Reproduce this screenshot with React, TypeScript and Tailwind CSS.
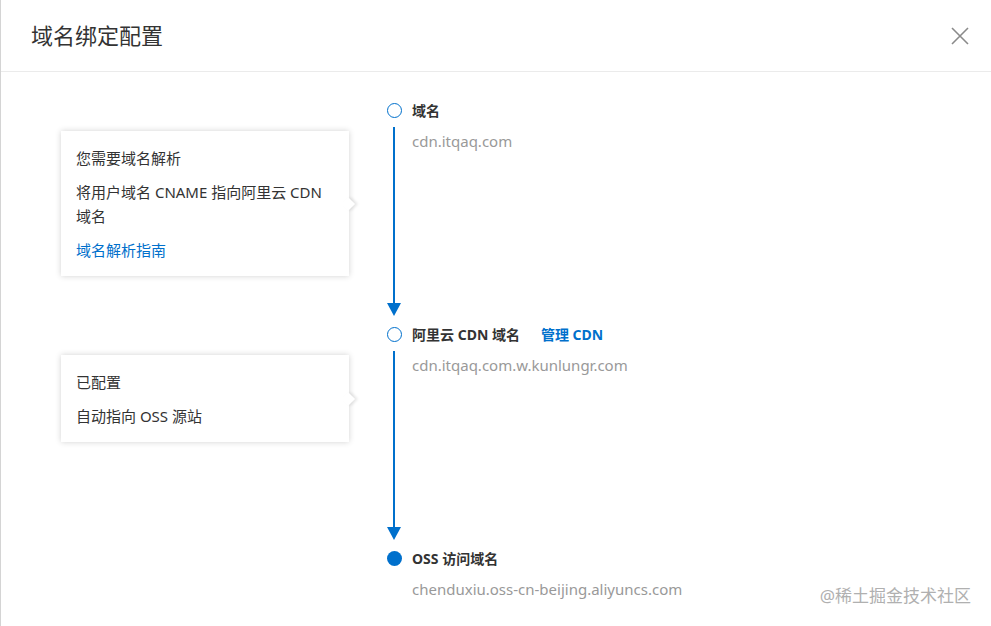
import React from 'react';

const font = { fontFamily: '"Noto Sans", "Noto Sans CJK SC", sans-serif' };

type Step = {
  label: React.ReactNode;
  value: string;
  filled?: boolean;
  last?: boolean;
  card?: React.ReactNode;
};

const Card: React.FC<{ children: React.ReactNode }> = ({ children }) => (
  <div className="relative mt-[28px] w-[288px] bg-white px-[15px] pt-[15px] pb-[14px] shadow-[0_0_6px_rgba(0,0,0,0.18)]">
    <div className="flex flex-col gap-[10px] break-keep text-[15px] leading-6 text-[#333]">{children}</div>
    <div className="absolute right-[-4px] top-1/2 h-[10px] w-[10px] -translate-y-1/2 rotate-45 bg-white shadow-[2px_-2px_3px_rgba(0,0,0,0.1)]" />
  </div>
);

const steps: Step[] = [
  {
    label: <span>域名</span>,
    value: 'cdn.itqaq.com',
    card: (
      <>
        <p>您需要域名解析</p>
        <p>将用户域名 CNAME 指向阿里云 CDN 域名</p>
        <a className="text-[#0070cc]">域名解析指南</a>
      </>
    ),
  },
  {
    label: (
      <>
        <span>阿里云 CDN 域名</span>
        <a className="ml-[21px] text-[#0070cc]">管理 CDN</a>
      </>
    ),
    value: 'cdn.itqaq.com.w.kunlungr.com',
    card: (
      <>
        <p>已配置</p>
        <p>自动指向 OSS 源站</p>
      </>
    ),
  },
  {
    label: <span>OSS 访问域名</span>,
    value: 'chenduxiu.oss-cn-beijing.aliyuncs.com',
    filled: true,
    last: true,
  },
];

export default function App() {
  return (
    <div style={font} className="relative h-[626px] w-[991px] overflow-hidden border-l border-[#d4d4d4] bg-white">
      <div className="flex h-[72px] items-center justify-between border-b border-[#ebebeb] pl-[30px] pr-[21px]">
        <h1 className="text-[22px] font-normal text-[#333]">域名绑定配置</h1>
        <svg width="20" height="20" viewBox="0 0 20 20" className="text-[#8a8a8a]">
          <path d="M2 2L18 18M18 2L2 18" stroke="currentColor" strokeWidth="1.6" />
        </svg>
      </div>

      <div className="flex flex-col pt-[31px]">
        {steps.map((s, i) => (
          <div key={i} className={`flex ${s.last ? '' : 'h-[224px]'}`}>
            <div className="w-[385px] pl-[60px]">{s.card && <Card>{s.card}</Card>}</div>
            <div className="flex w-[16px] flex-col items-center">
              {s.filled ? (
                <div className="h-[15px] w-[15px] rounded-full bg-[#0070cc]" />
              ) : (
                <div className="h-[15px] w-[15px] rounded-full border-[1.5px] border-[#0070cc]" />
              )}
              {!s.last && (
                <>
                  <div className="mt-[9px] w-[1.5px] flex-1 bg-[#0070cc]" />
                  <svg width="14" height="13" viewBox="0 0 14 13" className="mb-[11px] text-[#0070cc]">
                    <path d="M0 0H14L7 13Z" fill="currentColor" />
                  </svg>
                </>
              )}
            </div>
            <div className="ml-[10px] flex flex-col">
              <div className="flex h-[15px] items-center text-[14px] font-bold text-[#333]">{s.label}</div>
              <div className="mt-[13px] text-[15px] leading-5 text-[#999]">{s.value}</div>
            </div>
          </div>
        ))}
      </div>

      <div className="absolute bottom-[18px] right-[20px] text-[17px] text-[#b0b0b0]">@稀土掘金技术社区</div>
    </div>
  );
}
